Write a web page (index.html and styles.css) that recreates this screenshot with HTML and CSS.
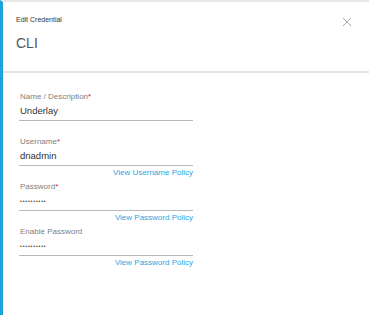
FILE: index.html
```
<!DOCTYPE html>
<html lang="en">
<head>
    <meta charset="UTF-8">
    <meta name="viewport" content="width=device-width, initial-scale=1.0">
    <title>Edit Credential</title>
    <link rel="stylesheet" href="styles.css">
</head>
<body>
    <div class="panel">
        <div class="header">
            <div>
                <div class="eyebrow">Edit Credential</div>
                <h1>CLI</h1>
            </div>
            <button class="close" title="Close">
                <svg width="10" height="10" viewBox="0 0 10 10">
                    <path d="M1 1L9 9M9 1L1 9" stroke="#a8a8a8" stroke-width="1" fill="none"/>
                </svg>
            </button>
        </div>

        <div class="form">
            <div class="group">
                <div class="field">
                    <label>Name / Description<span class="req">*</span></label>
                    <div class="value">Underlay</div>
                </div>
            </div>
            <div class="group">
                <div class="field">
                    <label>Username<span class="req">*</span></label>
                    <div class="value">dnadmin</div>
                </div>
                <a class="policy" href="#">View Username Policy</a>
            </div>
            <div class="group">
                <div class="field">
                    <label>Password<span class="req">*</span></label>
                    <div class="value dots">••••••••••</div>
                </div>
                <a class="policy" href="#">View Password Policy</a>
            </div>
            <div class="group">
                <div class="field">
                    <label>Enable Password</label>
                    <div class="value dots">••••••••••</div>
                </div>
                <a class="policy" href="#">View Password Policy</a>
            </div>
        </div>
    </div>
</body>
</html>
```

FILE: styles.css
```
body {
    margin: 0;
    background: #fff;
    font-family: "Liberation Sans", Arial, sans-serif;
}
.panel {
    border-top: 2px solid #e8e8e8;
    border-left: 3px solid #1ba3dc;
    height: 315px;
    box-sizing: border-box;
}
.header {
    display: flex;
    justify-content: space-between;
    align-items: flex-start;
    padding: 13px 17px 19px 13px;
    border-bottom: 2px solid #e4e4e4;
}
.eyebrow {
    font-size: 7px;
    line-height: 10px;
    color: #333;
}
h1 {
    margin: 9px 0 0;
    font-size: 14px;
    line-height: 18px;
    font-weight: normal;
    color: #555;
}
.close {
    background: none;
    border: none;
    padding: 0;
    margin-top: 2px;
    cursor: pointer;
    line-height: 0;
}
.form {
    padding: 19px 0 0 16px;
    width: 174px;
}
.group {
    height: 45px;
}
.field {
    padding: 0 1px 3px;
    border-bottom: 1px solid #b8b8b8;
}
label {
    display: block;
    font-size: 8px;
    line-height: 10px;
    color: #808080;
}
.req { color: #e2231a; }
.value {
    margin-top: 3px;
    font-size: 9.5px;
    line-height: 12px;
    color: #333;
}
.dots {
    font-size: 5px;
    letter-spacing: 0.9px;
}
.policy {
    display: block;
    text-align: right;
    margin-top: 2px;
    font-size: 8px;
    line-height: 10px;
    color: #2aa6df;
    text-decoration: none;
}
```
